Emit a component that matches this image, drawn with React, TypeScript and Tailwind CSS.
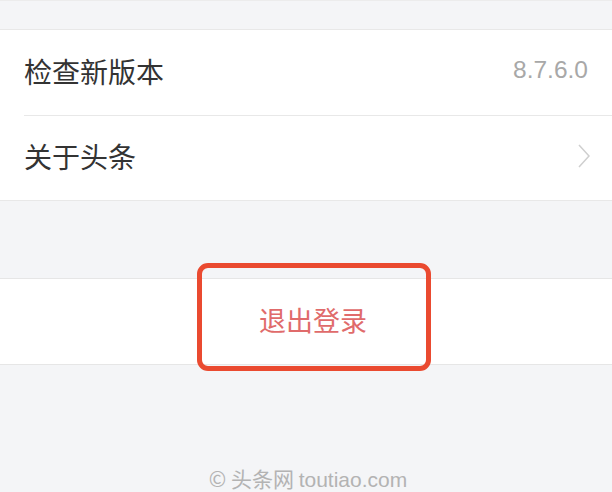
const font = { fontFamily: '"Noto Sans CJK SC", "Noto Sans", sans-serif' }
const latin = { fontFamily: '"Liberation Sans", sans-serif' }

export default function App() {
  return (
    <div className="w-[612px] h-[492px] bg-[#f4f5f7] overflow-hidden" style={font}>
      <div className="h-[29px] border-t border-[#ececec]" />

      {/* settings list */}
      <div className="bg-white border-y border-[#e8e8e8]">
        <div className="flex items-center justify-between h-[85px] pl-6 pr-6 text-[28px] leading-none text-[#333]">
          <span className="-mt-1">检查新版本</span>
          <span className="text-[24.5px] text-[#a8a8a8] -mt-1" style={latin}>8.7.6.0</span>
        </div>
        <div className="ml-6 border-t border-[#e8e8e8]" />
        <div className="flex items-center justify-between h-[84px] pl-6 pr-[22px] text-[28px] leading-none text-[#333]">
          <span className="-mt-1">关于头条</span>
          <svg width="12" height="24" viewBox="0 0 12 24" fill="none" stroke="#cfcfcf" strokeWidth="1.5" className="-mt-1">
            <polyline points="1 1 11 12 1 23" />
          </svg>
        </div>
      </div>

      <div className="h-[77px]" />

      {/* logout */}
      <div className="relative bg-white border-y border-[#e6e6e6] h-[87px] flex items-center justify-center pl-[14px]">
        <span className="text-[27px] leading-none text-[#e06b6b] -mt-1">退出登录</span>
        <div className="absolute left-[197px] top-[-16px] w-[234px] h-[108px] border-[5px] border-[#ea4a30] rounded-[11px]" />
      </div>

      <div className="pt-[103px] pl-[4px] text-center text-[21px] leading-none text-[#b3b3b3]">
        © 头条网 <span style={latin}>toutiao.com</span>
      </div>
    </div>
  )
}
